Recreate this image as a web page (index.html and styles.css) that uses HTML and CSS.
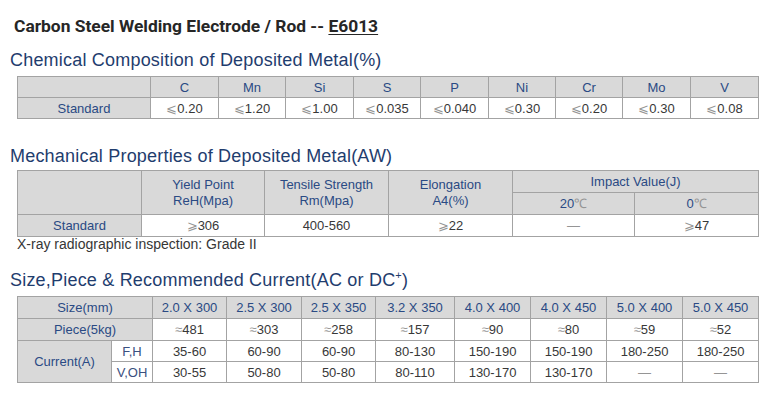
FILE: index.html
```html
<!DOCTYPE html>
<html lang="en">
<head>
<meta charset="utf-8">
<title>Carbon Steel Welding Electrode / Rod -- E6013</title>
<link rel="stylesheet" href="styles.css">
</head>
<body>
<div class="page">
  <h1 class="title">Carbon Steel Welding Electrode / Rod -- <span class="code">E6013</span></h1>

  <h2 class="section s1">Chemical Composition of Deposited Metal(%)</h2>
  <table class="grid t1">
    <colgroup>
      <col class="w133"><col class="w68"><col class="w67"><col class="w68"><col class="w67"><col class="w68"><col class="w67"><col class="w67"><col class="w68"><col class="w68">
    </colgroup>
    <tr class="r21">
      <th></th><th>C</th><th>Mn</th><th>Si</th><th>S</th><th>P</th><th>Ni</th><th>Cr</th><th>Mo</th><th>V</th>
    </tr>
    <tr class="r21">
      <th>Standard</th>
      <td><span class="sym">⩽</span>0.20</td>
      <td><span class="sym">⩽</span>1.20</td>
      <td><span class="sym">⩽</span>1.00</td>
      <td><span class="sym">⩽</span>0.035</td>
      <td><span class="sym">⩽</span>0.040</td>
      <td><span class="sym">⩽</span>0.30</td>
      <td><span class="sym">⩽</span>0.20</td>
      <td><span class="sym">⩽</span>0.30</td>
      <td><span class="sym">⩽</span>0.08</td>
    </tr>
  </table>

  <h2 class="section s2">Mechanical Properties of Deposited Metal(AW)</h2>
  <table class="grid t2">
    <colgroup>
      <col class="w124"><col class="w123"><col class="w124"><col class="w124"><col class="w122"><col class="w124">
    </colgroup>
    <tr class="r22">
      <th rowspan="2"></th>
      <th rowspan="2" class="two">Yield Point<br>ReH(Mpa)</th>
      <th rowspan="2" class="two">Tensile Strength<br>Rm(Mpa)</th>
      <th rowspan="2" class="two">Elongation<br>A4(%)</th>
      <th colspan="2">Impact Value(J)</th>
    </tr>
    <tr class="r22">
      <th class="temp">20<span class="sym">℃</span></th>
      <th class="temp">0<span class="sym">℃</span></th>
    </tr>
    <tr class="r22">
      <th>Standard</th>
      <td><span class="sym">⩾</span>306</td>
      <td>400-560</td>
      <td><span class="sym">⩾</span>22</td>
      <td><span class="sym">—</span></td>
      <td><span class="sym">⩾</span>47</td>
    </tr>
  </table>
  <p class="note">X-ray radiographic inspection: Grade II</p>

  <h2 class="section s3">Size,Piece &amp; Recommended Current(AC or DC<sup>+</sup>)</h2>
  <table class="grid t3">
    <colgroup>
      <col class="w94"><col class="w41"><col class="w74"><col class="w75"><col class="w74"><col class="w79"><col class="w76"><col class="w76"><col class="w76"><col class="w76">
    </colgroup>
    <tr class="r22">
      <th colspan="2">Size(mm)</th>
      <th>2.0 X 300</th><th>2.5 X 300</th><th>2.5 X 350</th><th>3.2 X 350</th><th>4.0 X 400</th><th>4.0 X 450</th><th>5.0 X 400</th><th>5.0 X 450</th>
    </tr>
    <tr class="r22">
      <th colspan="2">Piece(5kg)</th>
      <td><span class="sym">≈</span>481</td>
      <td><span class="sym">≈</span>303</td>
      <td><span class="sym">≈</span>258</td>
      <td><span class="sym">≈</span>157</td>
      <td><span class="sym">≈</span>90</td>
      <td><span class="sym">≈</span>80</td>
      <td><span class="sym">≈</span>59</td>
      <td><span class="sym">≈</span>52</td>
    </tr>
    <tr class="r21">
      <th rowspan="2">Current(A)</th>
      <td class="pos">F,H</td>
      <td>35-60</td><td>60-90</td><td>60-90</td><td>80-130</td><td>150-190</td><td>150-190</td><td>180-250</td><td>180-250</td>
    </tr>
    <tr class="r21">
      <td class="pos">V,OH</td>
      <td>30-55</td><td>50-80</td><td>50-80</td><td>80-110</td><td>130-170</td><td>130-170</td><td><span class="sym">—</span></td><td><span class="sym">—</span></td>
    </tr>
  </table>
</div>
</body>
</html>
```

FILE: styles.css
```css
html, body {
  margin: 0;
  padding: 0;
  background: #ffffff;
}

.page {
  width: 773px;
  font-family: "Liberation Sans", Arial, sans-serif;
}

.title {
  margin: 16px 0 0 14px;
  font-family: Roboto, "Liberation Sans", sans-serif;
  font-weight: 700;
  font-size: 17.4px;
  line-height: 20px;
  color: #262626;
}

.code {
  text-decoration: underline;
  text-underline-offset: 2px;
  text-decoration-thickness: 1px;
}

.section {
  margin: 0 0 0 10px;
  font-family: "Liberation Sans", Arial, sans-serif;
  font-weight: 400;
  font-size: 18px;
  letter-spacing: 0.2px;
  line-height: 22px;
  color: #1f3d6e;
}

.section sup {
  font-size: 11px;
  line-height: 0;
  vertical-align: 7px;
}

.s1 { margin-top: 13px; }
.s2 { margin-top: 26px; }
.s3 { margin-top: 17px; }

.grid {
  margin-left: 17px;
  border-collapse: collapse;
  table-layout: fixed;
  width: 741px;
  font-size: 13px;
  line-height: 15px;
}

.t1 { margin-top: 5px; }
.t2 { margin-top: 3px; }
.t3 { margin-top: 5px; }

.grid th,
.grid td {
  border: 1px solid #a3a3a3;
  padding: 0;
  text-align: center;
  vertical-align: middle;
  white-space: nowrap;
}

.grid th {
  background: #d9d9d9;
  color: #2a4a84;
  font-weight: 400;
}

.grid td {
  background: #ffffff;
  color: #383838;
}

.grid td.pos {
  color: #3a5080;
}

.r21 { height: 21px; }
.r22 { height: 22px; }

.two {
  line-height: 16px;
}

.temp {
  color: #3a3a3a;
}

.sym {
  color: #959595;
}

.note {
  margin: 0 0 0 17px;
  font-size: 14px;
  line-height: 15px;
  color: #363636;
}

.w133 { width: 133px; }
.w124 { width: 124px; }
.w123 { width: 123px; }
.w122 { width: 122px; }
.w94 { width: 94px; }
.w79 { width: 79px; }
.w76 { width: 76px; }
.w75 { width: 75px; }
.w74 { width: 74px; }
.w68 { width: 68px; }
.w67 { width: 67px; }
.w41 { width: 41px; }
```
